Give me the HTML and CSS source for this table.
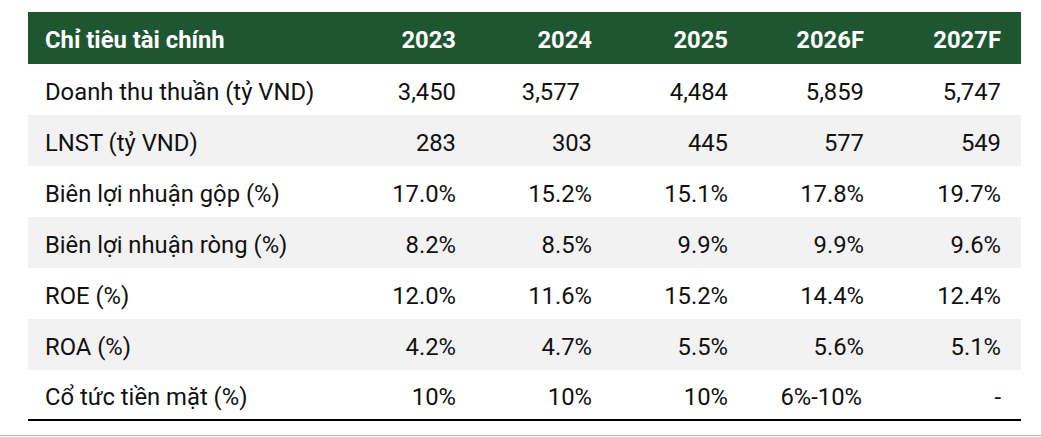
FILE: index.html
```html
<!DOCTYPE html>
<html lang="vi">
<head>
<meta charset="utf-8">
<link rel="stylesheet" href="styles.css">
</head>
<body>
<div class="page">
  <table class="fin">
    <colgroup>
      <col class="c-label"><col class="c-num"><col class="c-num"><col class="c-num"><col class="c-num"><col class="c-last">
    </colgroup>
    <thead>
      <tr><th class="lbl">Chỉ tiêu tài chính</th><th>2023</th><th>2024</th><th>2025</th><th>2026F</th><th>2027F</th></tr>
    </thead>
    <tbody>
      <tr><td class="lbl">Doanh thu thuần (tỷ VND)</td><td>3,450</td><td class="shift">3,577</td><td>4,484</td><td>5,859</td><td>5,747</td></tr>
      <tr class="alt"><td class="lbl">LNST (tỷ VND)</td><td>283</td><td>303</td><td>445</td><td>577</td><td>549</td></tr>
      <tr><td class="lbl">Biên lợi nhuận gộp (%)</td><td>17.0%</td><td>15.2%</td><td>15.1%</td><td>17.8%</td><td>19.7%</td></tr>
      <tr class="alt"><td class="lbl">Biên lợi nhuận ròng (%)</td><td>8.2%</td><td>8.5%</td><td>9.9%</td><td>9.9%</td><td>9.6%</td></tr>
      <tr><td class="lbl">ROE (%)</td><td>12.0%</td><td>11.6%</td><td>15.2%</td><td>14.4%</td><td>12.4%</td></tr>
      <tr class="alt"><td class="lbl">ROA (%)</td><td>4.2%</td><td>4.7%</td><td>5.5%</td><td>5.6%</td><td>5.1%</td></tr>
      <tr class="last"><td class="lbl">Cổ tức tiền mặt (%)</td><td>10%</td><td>10%</td><td>10%</td><td class="shift-s">6%-10%</td><td>-</td></tr>
    </tbody>
  </table>
  <div class="rule"></div>
</div>
</body>
</html>
```

FILE: styles.css
```css
html, body {
  margin: 0;
  padding: 0;
  background: #ffffff;
}

.page {
  padding-top: 12px;
  font-family: Roboto, "Liberation Sans", Arial, sans-serif;
}

.fin {
  margin-left: 28px;
  width: 993px;
  border-collapse: collapse;
  table-layout: fixed;
  font-size: 23.8px;
  color: #111111;
}

.c-label { width: 312px; }
.c-num { width: 136px; }
.c-last { width: 137px; }

.fin th,
.fin td {
  padding: 0 20px 0 0;
  text-align: right;
  white-space: nowrap;
}

.fin th {
  height: 52px;
  background: #1e5631;
  color: #ffffff;
  font-weight: 700;
  padding-top: 3px;
  box-sizing: border-box;
}

.fin td {
  height: 51px;
  padding-top: 4px;
  box-sizing: border-box;
}

.fin .lbl {
  text-align: left;
  padding-left: 17px;
  padding-right: 0;
}

.fin tr.alt td {
  background: #f2f2f2;
}

.fin tr.last td {
  height: 50px;
  border-bottom: 2px solid #000000;
}

.fin td.shift {
  padding-right: 32px;
}

.fin td.shift-s {
  padding-right: 22px;
}

.rule {
  margin-top: 14px;
  height: 1px;
  background: #b4b4b4;
}
```
